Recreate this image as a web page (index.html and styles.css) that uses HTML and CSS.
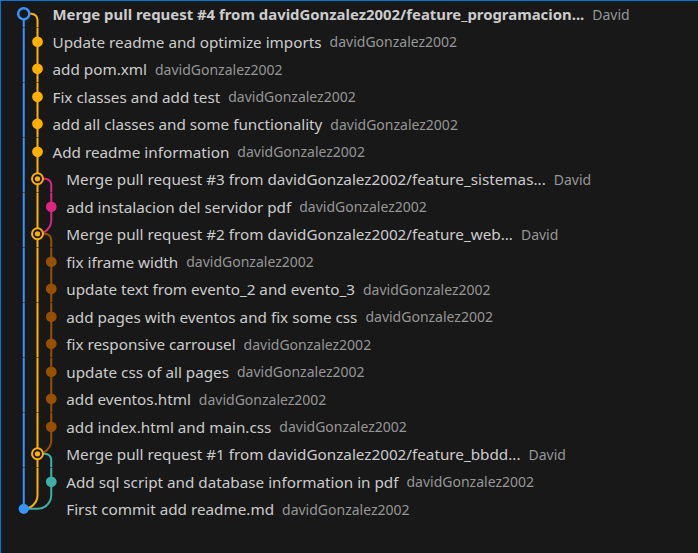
FILE: index.html
```html
<!DOCTYPE html>
<html>
<head>
<meta charset="utf-8">
<link rel="stylesheet" href="styles.css">
</head>
<body>
<div class="graph">
  <div class="row">
    <svg class="lanes2" viewBox="0 0 33 22"><path class="b" d="M11 11V22"/><path class="y" d="M11 11H17A5 5 0 0 1 22 16V22"/><circle class="head" cx="11" cy="11" r="4.5"/></svg>
    <span class="label bold">Merge pull request #4 from davidGonzalez2002/feature_programacion...</span><span class="author">David</span>
  </div>
  <div class="row">
    <svg class="lanes2" viewBox="0 0 33 22"><path class="b" d="M11 0V22"/><path class="y" d="M22 0V22"/><circle class="fy" cx="22" cy="11" r="4.3"/></svg>
    <span class="label">Update readme and optimize imports</span><span class="author">davidGonzalez2002</span>
  </div>
  <div class="row">
    <svg class="lanes2" viewBox="0 0 33 22"><path class="b" d="M11 0V22"/><path class="y" d="M22 0V22"/><circle class="fy" cx="22" cy="11" r="4.3"/></svg>
    <span class="label">add pom.xml</span><span class="author">davidGonzalez2002</span>
  </div>
  <div class="row">
    <svg class="lanes2" viewBox="0 0 33 22"><path class="b" d="M11 0V22"/><path class="y" d="M22 0V22"/><circle class="fy" cx="22" cy="11" r="4.3"/></svg>
    <span class="label">Fix classes and add test</span><span class="author">davidGonzalez2002</span>
  </div>
  <div class="row">
    <svg class="lanes2" viewBox="0 0 33 22"><path class="b" d="M11 0V22"/><path class="y" d="M22 0V22"/><circle class="fy" cx="22" cy="11" r="4.3"/></svg>
    <span class="label">add all classes and some functionality</span><span class="author">davidGonzalez2002</span>
  </div>
  <div class="row">
    <svg class="lanes2" viewBox="0 0 33 22"><path class="b" d="M11 0V22"/><path class="y" d="M22 0V22"/><circle class="fy" cx="22" cy="11" r="4.3"/></svg>
    <span class="label">Add readme information</span><span class="author">davidGonzalez2002</span>
  </div>
  <div class="row">
    <svg class="lanes3" viewBox="0 0 44 22"><path class="b" d="M11 0V22"/><path class="y" d="M22 0V22"/><path class="p" d="M22 11H28A5 5 0 0 1 33 16V22"/><circle class="my" cx="22" cy="11" r="4.4"/><circle class="fy" cx="22" cy="11" r="2.1"/></svg>
    <span class="label">Merge pull request #3 from davidGonzalez2002/feature_sistemas...</span><span class="author">David</span>
  </div>
  <div class="row">
    <svg class="lanes3" viewBox="0 0 44 22"><path class="b" d="M11 0V22"/><path class="y" d="M22 0V22"/><path class="p" d="M33 0V22"/><circle class="fp" cx="33" cy="11" r="4.3"/></svg>
    <span class="label">add instalacion del servidor pdf</span><span class="author">davidGonzalez2002</span>
  </div>
  <div class="row">
    <svg class="lanes3" viewBox="0 0 44 22"><path class="b" d="M11 0V22"/><path class="y" d="M22 0V22"/><path class="p" d="M33 0A11 11 0 0 1 22 11"/><path class="br" d="M22 11H28A5 5 0 0 1 33 16V22"/><circle class="my" cx="22" cy="11" r="4.4"/><circle class="fy" cx="22" cy="11" r="2.1"/></svg>
    <span class="label">Merge pull request #2 from davidGonzalez2002/feature_web...</span><span class="author">David</span>
  </div>
  <div class="row">
    <svg class="lanes3" viewBox="0 0 44 22"><path class="b" d="M11 0V22"/><path class="y" d="M22 0V22"/><path class="br" d="M33 0V22"/><circle class="fbr" cx="33" cy="11" r="4.3"/></svg>
    <span class="label">fix iframe width</span><span class="author">davidGonzalez2002</span>
  </div>
  <div class="row">
    <svg class="lanes3" viewBox="0 0 44 22"><path class="b" d="M11 0V22"/><path class="y" d="M22 0V22"/><path class="br" d="M33 0V22"/><circle class="fbr" cx="33" cy="11" r="4.3"/></svg>
    <span class="label">update text from evento_2 and evento_3</span><span class="author">davidGonzalez2002</span>
  </div>
  <div class="row">
    <svg class="lanes3" viewBox="0 0 44 22"><path class="b" d="M11 0V22"/><path class="y" d="M22 0V22"/><path class="br" d="M33 0V22"/><circle class="fbr" cx="33" cy="11" r="4.3"/></svg>
    <span class="label">add pages with eventos and fix some css</span><span class="author">davidGonzalez2002</span>
  </div>
  <div class="row">
    <svg class="lanes3" viewBox="0 0 44 22"><path class="b" d="M11 0V22"/><path class="y" d="M22 0V22"/><path class="br" d="M33 0V22"/><circle class="fbr" cx="33" cy="11" r="4.3"/></svg>
    <span class="label">fix responsive carrousel</span><span class="author">davidGonzalez2002</span>
  </div>
  <div class="row">
    <svg class="lanes3" viewBox="0 0 44 22"><path class="b" d="M11 0V22"/><path class="y" d="M22 0V22"/><path class="br" d="M33 0V22"/><circle class="fbr" cx="33" cy="11" r="4.3"/></svg>
    <span class="label">update css of all pages</span><span class="author">davidGonzalez2002</span>
  </div>
  <div class="row">
    <svg class="lanes3" viewBox="0 0 44 22"><path class="b" d="M11 0V22"/><path class="y" d="M22 0V22"/><path class="br" d="M33 0V22"/><circle class="fbr" cx="33" cy="11" r="4.3"/></svg>
    <span class="label">add eventos.html</span><span class="author">davidGonzalez2002</span>
  </div>
  <div class="row">
    <svg class="lanes3" viewBox="0 0 44 22"><path class="b" d="M11 0V22"/><path class="y" d="M22 0V22"/><path class="br" d="M33 0V22"/><circle class="fbr" cx="33" cy="11" r="4.3"/></svg>
    <span class="label">add index.html and main.css</span><span class="author">davidGonzalez2002</span>
  </div>
  <div class="row">
    <svg class="lanes3" viewBox="0 0 44 22"><path class="b" d="M11 0V22"/><path class="y" d="M22 0V22"/><path class="br" d="M33 0A11 11 0 0 1 22 11"/><path class="t" d="M22 11H28A5 5 0 0 1 33 16V22"/><circle class="my" cx="22" cy="11" r="4.4"/><circle class="fy" cx="22" cy="11" r="2.1"/></svg>
    <span class="label">Merge pull request #1 from davidGonzalez2002/feature_bbdd...</span><span class="author">David</span>
  </div>
  <div class="row">
    <svg class="lanes3" viewBox="0 0 44 22"><path class="b" d="M11 0V22"/><path class="y" d="M22 0V22"/><path class="t" d="M33 0V22"/><circle class="ft" cx="33" cy="11" r="4.3"/></svg>
    <span class="label">Add sql script and database information in pdf</span><span class="author">davidGonzalez2002</span>
  </div>
  <div class="row">
    <svg class="lanes3" viewBox="0 0 44 22"><path class="b" d="M11 0V11"/><path class="y" d="M22 0A11 11 0 0 1 11 11"/><path class="t" d="M33 0A11 11 0 0 1 22 11H11"/><circle class="fb" cx="11" cy="11" r="4.1"/></svg>
    <span class="label">First commit add readme.md</span><span class="author">davidGonzalez2002</span>
  </div>
</div>
</body>
</html>
```
FILE: styles.css
```css
html, body {
  margin: 0;
  padding: 0;
  background: #181818;
}
.graph {
  width: 698px;
  height: 553px;
  box-sizing: border-box;
  padding: 0.25px 0 0 10.25px;
  background: #181818;
  box-shadow: inset 1px 1px 0 #0078d4;
  font-family: "Noto Sans", "Open Sans", sans-serif;
  font-size: 15.25px;
  color: #cccccc;
  overflow: hidden;
}
.row {
  display: flex;
  align-items: center;
  height: 27.5px;
  white-space: nowrap;
}
.row svg {
  flex: none;
  height: 27.5px;
}
.lanes2 { width: 41.25px; }
.lanes3 { width: 55px; }
.label {
  margin-left: 1px;
}
.bold {
  font-weight: 700;
  font-size: 14.9px;
}
.author {
  margin-left: 8px;
  font-size: 14px;
  color: #969696;
}
path {
  fill: none;
  stroke-width: 1.6;
}
.b { stroke: #3794ff; }
.y { stroke: #ffb000; }
.p { stroke: #dc267f; }
.br { stroke: #994f00; }
.t { stroke: #40b0a6; }
.head { fill: #181818; stroke: #3794ff; stroke-width: 2; }
.my { fill: #181818; stroke: #ffb000; stroke-width: 1.6; }
.fy { fill: #ffb000; }
.fp { fill: #dc267f; }
.fbr { fill: #994f00; }
.ft { fill: #40b0a6; }
.fb { fill: #3794ff; }
```
